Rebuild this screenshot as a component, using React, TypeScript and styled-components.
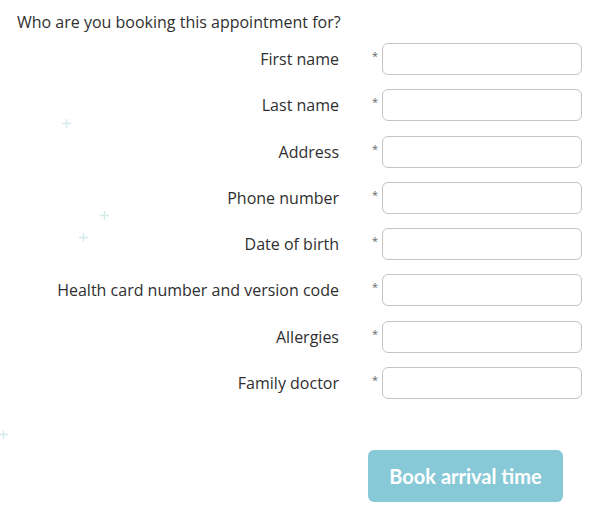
import styled, { createGlobalStyle } from "styled-components";

const GlobalStyle = createGlobalStyle`
    html, body {
        margin: 0;
        padding: 0;
        background: #ffffff;
    }
    body {
        font-family: "Open Sans", Arial, sans-serif;
        color: #333333;
    }
`;

const fields = [
    "First name",
    "Last name",
    "Address",
    "Phone number",
    "Date of birth",
    "Health card number and version code",
    "Allergies",
    "Family doctor",
];

const sparkles = [
    { x: 62, y: 119 },
    { x: 100, y: 211 },
    { x: 79, y: 233 },
    { x: -1, y: 430 },
];

const App = () => {
    return (
        <Page>
            <GlobalStyle />
            {sparkles.map((s, i) => (
                <Sparkle key={i} $x={s.x} $y={s.y}>
                    <svg width="9" height="9" viewBox="0 0 9 9">
                        <path d="M4.5 0v9M0 4.5h9" stroke="#d3ecea" strokeWidth="1.4" />
                    </svg>
                </Sparkle>
            ))}
            <Title>Who are you booking this appointment for?</Title>
            <Form>
                {fields.map((f) => (
                    <Row key={f}>
                        <Label>{f}</Label>
                        <Required>*</Required>
                        <Input type="text" />
                    </Row>
                ))}
            </Form>
            <Actions>
                <BookButton>Book arrival time</BookButton>
            </Actions>
        </Page>
    );
};

export default App;

const Page = styled.div`
    position: relative;
    width: 600px;
    height: 514px;
    overflow: hidden;
    padding: 12px 0 0 17px;
    box-sizing: border-box;
`;

const Sparkle = styled.span<{ $x: number; $y: number }>`
    position: absolute;
    left: ${(p) => p.$x}px;
    top: ${(p) => p.$y}px;
    width: 9px;
    height: 9px;
    display: block;
    line-height: 0;
`;

const Title = styled.h1`
    margin: 0;
    font-size: 16px;
    font-weight: 400;
    line-height: 20px;
    color: #2f2f2f;
`;

const Form = styled.div`
    display: flex;
    flex-direction: column;
    gap: 14.3px;
    margin-top: 11px;
`;

const Row = styled.div`
    display: grid;
    grid-template-columns: 322px 43px 200px;
    align-items: center;
    height: 32px;
`;

const Label = styled.label`
    text-align: right;
    font-size: 16px;
    color: #2f2f2f;
`;

const Required = styled.span`
    align-self: start;
    justify-self: end;
    padding: 8px 4px 0 0;
    font-size: 11px;
    line-height: 10px;
    color: #666666;
`;

const Input = styled.input`
    box-sizing: border-box;
    width: 200px;
    height: 32px;
    border: 1px solid #c4c4c4;
    border-radius: 6px;
    background: #ffffff;
    outline: none;
    padding: 0 8px;
`;

const Actions = styled.div`
    display: flex;
    padding-left: 351px;
    margin-top: 51px;
`;

const BookButton = styled.button`
    width: 195px;
    height: 52px;
    border: none;
    border-radius: 6px;
    background: #88c9d7;
    color: #ffffff;
    font-family: Lato, "Open Sans", sans-serif;
    font-weight: 700;
    font-size: 20px;
    cursor: pointer;
`;
